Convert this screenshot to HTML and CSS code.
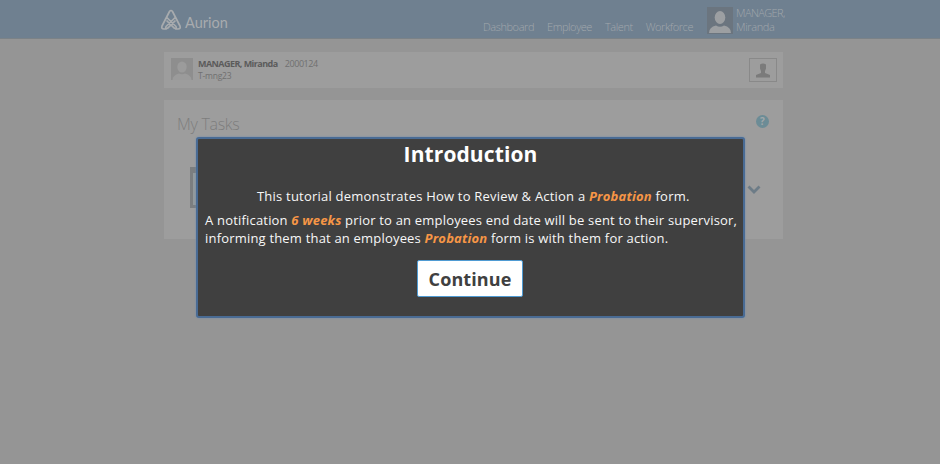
FILE: index.html
```html
<!DOCTYPE html>
<html lang="en">
<head>
<meta charset="utf-8">
<title>Aurion</title>
<link rel="stylesheet" href="styles.css">
</head>
<body>
<header class="topbar">
  <div class="container topbar-inner">
    <div class="brand">
      <svg class="mark" viewBox="0 0 22 22" width="22" height="22"><path d="M6.500 11.500 14.500 19.300Q17 20.500 16 17.500L6.800 8.500M15.500 11.500 7.500 19.300Q5 20.500 6 17.500L15.200 8.500M9.500 2.500Q11 .5 12.500 2.500L20 17Q21 20 18 20H15M9.500 2.500 2 17Q1 20 4 20H7" fill="none" stroke="currentColor" stroke-width="1.700" stroke-linejoin="round"/></svg>
      <span class="wordmark">Aurion</span>
    </div>
    <nav class="nav">
      <a>Dashboard</a><a>Employee</a><a>Talent</a><a>Workforce</a>
    </nav>
    <div class="user">
      <svg class="avatar" viewBox="0 0 26 27" width="26" height="27"><rect width="26" height="27" fill="#6b757f"/><ellipse cx="13" cy="10.5" rx="5.3" ry="6.5" fill="#9c9fa2"/><path d="M2 26Q2 20 9 18.500Q13 21 17 18.500Q24 20 24 26Z" fill="#9c9fa2"/></svg>
      <span class="user-name">MANAGER,<br>Miranda</span>
    </div>
  </div>
</header>
<main class="container">
  <section class="card person">
    <svg class="photo" viewBox="0 0 22 22" width="22" height="22"><rect width="22" height="22" fill="#8e8e8e"/><ellipse cx="11" cy="9" rx="4.700" ry="5.500" fill="#9b9b9b"/><path d="M1.500 22Q1.500 17 8 15.500Q11 17 14 15.500Q20.500 17 20.500 22Z" fill="#9b9b9b"/></svg>
    <div class="person-text">
      <div><b class="person-name">MANAGER, Miranda</b><span class="person-id">2000124</span></div>
      <div class="person-code">T-mng23</div>
    </div>
    <div class="profile-button">
      <svg viewBox="0 0 16 15" width="16" height="15"><path d="M5 1.500Q8-.5 11 1.500V5.500L10 8V10L15 12V14.500H1V12L6 10V8L5 5.500Z" fill="#7b7b7b"/></svg>
    </div>
  </section>
  <section class="card tasks">
    <div class="tasks-head">
      <h1>My Tasks</h1>
      <span class="help">?</span>
    </div>
    <div class="tasks-body">
      <div class="tile"></div>
      <svg class="chevron" viewBox="0 0 14 10" width="14" height="10"><path d="M1.500 1.500 7 7 12.500 1.500" fill="none" stroke="#6d7c87" stroke-width="2.800"/></svg>
    </div>
  </section>
</main>
<div class="dialog">
  <h2>Introduction</h2>
  <p class="line lead">This tutorial demonstrates How to Review &amp; Action a <em>Probation</em> form.</p>
  <p class="line second">A notification <em>6 weeks</em> prior to an employees end date will be sent to their supervisor,</p>
  <p class="line third">informing them that an employees <em>Probation</em> form is with them for action.</p>
  <button class="continue">Continue</button>
</div>
</body>
</html>
```
FILE: styles.css
```css
* { box-sizing: border-box; }
body {
  margin: 0;
  height: 464px;
  overflow: hidden;
  background: #959595;
  font-family: "Open Sans", "Noto Sans", sans-serif;
}
.container { width: 619px; margin-left: 164px; }
.topbar { height: 39px; background: #6f8090; border-bottom: 1px solid #7b8287; }
.topbar-inner { display: flex; height: 38px; color: #a1a7ac; }
.brand { display: flex; width: 323px; margin-left: -4px; flex: none; }
.mark { margin-top: 9px; color: #a8abae; }
.wordmark { font: 400 14.5px/20px Lato, sans-serif; margin: 13px 0 0 3px; color: #a8abae; }
.nav { display: flex; gap: 13px; padding-top: 19px; width: 224px; flex: none; font-size: 11px; letter-spacing: -0.43px; line-height: 16px; font-weight: 300; white-space: nowrap; }
.user { display: flex; flex: none; gap: 3px; }
.avatar { margin-top: 7px; }
.user-name { font-size: 11px; line-height: 14px; letter-spacing: -0.35px; font-weight: 300; padding-top: 6px; }
.user-name::first-line { letter-spacing: -0.6px; }
.card { background: #9d9d9d; width: 619px; }
.person { display: flex; height: 36px; margin-top: 13px; padding: 6px 6px 6px 7px; }
.person-text { margin: 0 0 0 5px; flex: 1; font-size: 9px; line-height: 12px; color: #707070; white-space: nowrap; }
.person-name { color: #5b5b5b; letter-spacing: -0.55px; }
.person-id { margin-left: 7px; letter-spacing: -0.4px; }
.person-code { font-size: 8.5px; letter-spacing: -0.2px; }
.profile-button { width: 28px; height: 24px; border: 1px solid #898989; display: flex; align-items: center; justify-content: center; }
.tasks { height: 139px; margin-top: 12px; padding: 13px 14px 0 13px; }
.tasks-head { display: flex; justify-content: space-between; }
.tasks h1 { margin: 0; font-size: 16px; line-height: 22px; letter-spacing: -0.3px; font-weight: 300; color: #7d7d7d; }
.help { width: 13px; height: 13px; margin-top: 2px; border-radius: 50%; background: #6c8c96; color: #a2a8aa; font-size: 10px; line-height: 13px; font-weight: 700; text-align: center; }
.tasks-body { display: flex; justify-content: space-between; padding: 32px 8px 0 13px; }
.tile { width: 40px; height: 41px; border: 3px solid #7b7e80; border-top-width: 6px; background: #939a9c; }
.chevron { margin-top: 18px; }
.dialog {
  position: absolute;
  left: 196px;
  top: 137px;
  width: 549px;
  height: 181px;
  background: #404040;
  border: 2px solid #496b94;
  border-radius: 3px;
  box-shadow: 0 0 2px #668bb5;
  color: #f7f7f7;
}
.dialog h2 { margin: 0; padding-top: 1px; font-size: 21px; line-height: 28px; font-weight: 700; text-align: center; letter-spacing: 0.1px; color: #fff; }
.line { margin: 0; font-size: 13px; line-height: 18px; letter-spacing: 0.19px; white-space: nowrap; }
.line em { color: #f79646; font-weight: 700; }
.lead { margin: 19px 0 0 59px; letter-spacing: 0.21px; }
.second { margin: 6px 0 0 7px; }
.third { margin: 0 0 0 7px; }
.continue {
  display: block;
  width: 106px;
  height: 37px;
  margin: 13px 0 0 219px;
  padding: 0;
  border: 1px solid #4f9bd3;
  border-radius: 2px;
  background: #fff;
  color: #404040;
  font: 700 18px/34px "Open Sans", sans-serif;
  letter-spacing: 0.1px;
}
```
